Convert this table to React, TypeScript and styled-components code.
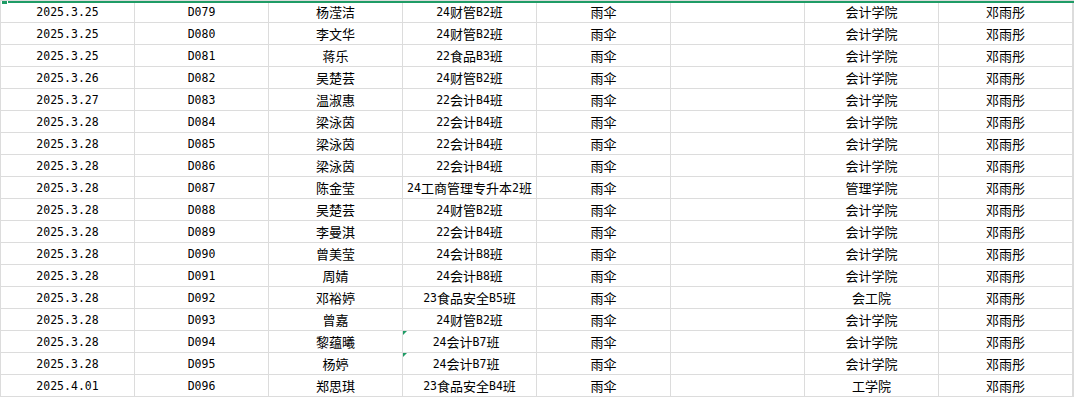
import React from "react";
import styled, { createGlobalStyle } from "styled-components";

const GlobalStyle = createGlobalStyle`
  html, body { margin: 0; padding: 0; background: #ffffff; }
  body { font-family: "Noto Sans CJK SC", "Noto Sans", sans-serif; }
`;

const GRID = "#dcdcdc";
const GREEN = "#1f9c66";

const Sheet = styled.div`
  position: relative;
  width: 1074px;
  height: 397px;
  overflow: hidden;
  background: #ffffff;
  box-sizing: border-box;
  border-top: 1px solid ${GRID};
  border-left: 1px solid ${GRID};
`;

const Row = styled.div`
  display: grid;
  grid-template-columns: repeat(8, 134px) 1fr;
  height: 22px;
  box-sizing: border-box;
  border-bottom: 1px solid ${GRID};
`;

const Cell = styled.div<{ $flag?: boolean }>`
  position: relative;
  display: flex;
  align-items: center;
  justify-content: center;
  box-sizing: border-box;
  border-right: 1px solid ${GRID};
  padding-top: 1px;
  font-family: "Noto Sans CJK SC", "Noto Sans", sans-serif;
  font-size: 13px;
  line-height: 20px;
  color: #000000;
  white-space: pre;
  overflow: hidden;

  &::before {
    content: "";
    display: ${(p) => (p.$flag ? "block" : "none")};
    position: absolute;
    top: 0;
    left: -1px;
    width: 0;
    height: 0;
    border-top: 5px solid ${GREEN};
    border-right: 5px solid transparent;
  }
`;

const Latin = styled.span`
  font-family: "DejaVu Sans Mono", "Liberation Mono", monospace;
  font-size: 11.5px;
  vertical-align: -1px;
`;

const SelectionEdge = styled.div`
  position: absolute;
  top: 0;
  left: 7px;
  right: 0;
  height: 2px;
  background: ${GREEN};
`;

const SelectionHandle = styled.div`
  position: absolute;
  top: 0;
  left: 1px;
  width: 5px;
  height: 3px;
  background: ${GREEN};
`;

const Mixed: React.FC<{ text: string }> = ({ text }) => {
  const parts = text.split(/([\x20-\x7E]+)/).filter((s) => s.length > 0);
  return (
    <>
      {parts.map((p, i) =>
        /^[\x20-\x7E]+$/.test(p) ? <Latin key={i}>{p}</Latin> : <React.Fragment key={i}>{p}</React.Fragment>
      )}
    </>
  );
};

type Rec = {
  date: string;
  id: string;
  name: string;
  cls: string;
  college: string;
  flag?: boolean;
};

const rows: Rec[] = [
  { date: "2025.3.25", id: "D079", name: "杨滢洁", cls: "24财管B2班", college: "会计学院" },
  { date: "2025.3.25", id: "D080", name: "李文华", cls: "24财管B2班", college: "会计学院" },
  { date: "2025.3.25", id: "D081", name: "蒋乐", cls: "22食品B3班", college: "会计学院" },
  { date: "2025.3.26", id: "D082", name: "吴楚芸", cls: "24财管B2班", college: "会计学院" },
  { date: "2025.3.27", id: "D083", name: "温淑惠", cls: "22会计B4班", college: "会计学院" },
  { date: "2025.3.28", id: "D084", name: "梁泳茵", cls: "22会计B4班", college: "会计学院" },
  { date: "2025.3.28", id: "D085", name: "梁泳茵", cls: "22会计B4班", college: "会计学院" },
  { date: "2025.3.28", id: "D086", name: "梁泳茵", cls: "22会计B4班", college: "会计学院" },
  { date: "2025.3.28", id: "D087", name: "陈金莹", cls: "24工商管理专升本2班", college: "管理学院" },
  { date: "2025.3.28", id: "D088", name: "吴楚芸", cls: "24财管B2班", college: "会计学院" },
  { date: "2025.3.28", id: "D089", name: "李曼淇", cls: "22会计B4班", college: "会计学院" },
  { date: "2025.3.28", id: "D090", name: "曾美莹", cls: "24会计B8班", college: "会计学院" },
  { date: "2025.3.28", id: "D091", name: "周婧", cls: "24会计B8班", college: "会计学院" },
  { date: "2025.3.28", id: "D092", name: "邓裕婷", cls: "23食品安全B5班", college: "会工院" },
  { date: "2025.3.28", id: "D093", name: "曾嘉", cls: "24财管B2班", college: "会计学院" },
  { date: "2025.3.28", id: "D094", name: "黎蕴曦", cls: "24会计B7班 ", college: "会计学院", flag: true },
  { date: "2025.3.28", id: "D095", name: "杨婷", cls: "24会计B7班 ", college: "会计学院", flag: true },
  { date: "2025.4.01", id: "D096", name: "郑思琪", cls: "23食品安全B4班", college: "工学院" },
];

export default function App() {
  return (
    <>
      <GlobalStyle />
      <Sheet>
        {rows.map((r) => (
          <Row key={r.id}>
            <Cell><Mixed text={r.date} /></Cell>
            <Cell><Mixed text={r.id} /></Cell>
            <Cell>{r.name}</Cell>
            <Cell $flag={r.flag}><Mixed text={r.cls} /></Cell>
            <Cell>雨伞</Cell>
            <Cell />
            <Cell>{r.college}</Cell>
            <Cell>邓雨彤</Cell>
            <Cell />
          </Row>
        ))}
        <SelectionEdge />
        <SelectionHandle />
      </Sheet>
    </>
  );
}
